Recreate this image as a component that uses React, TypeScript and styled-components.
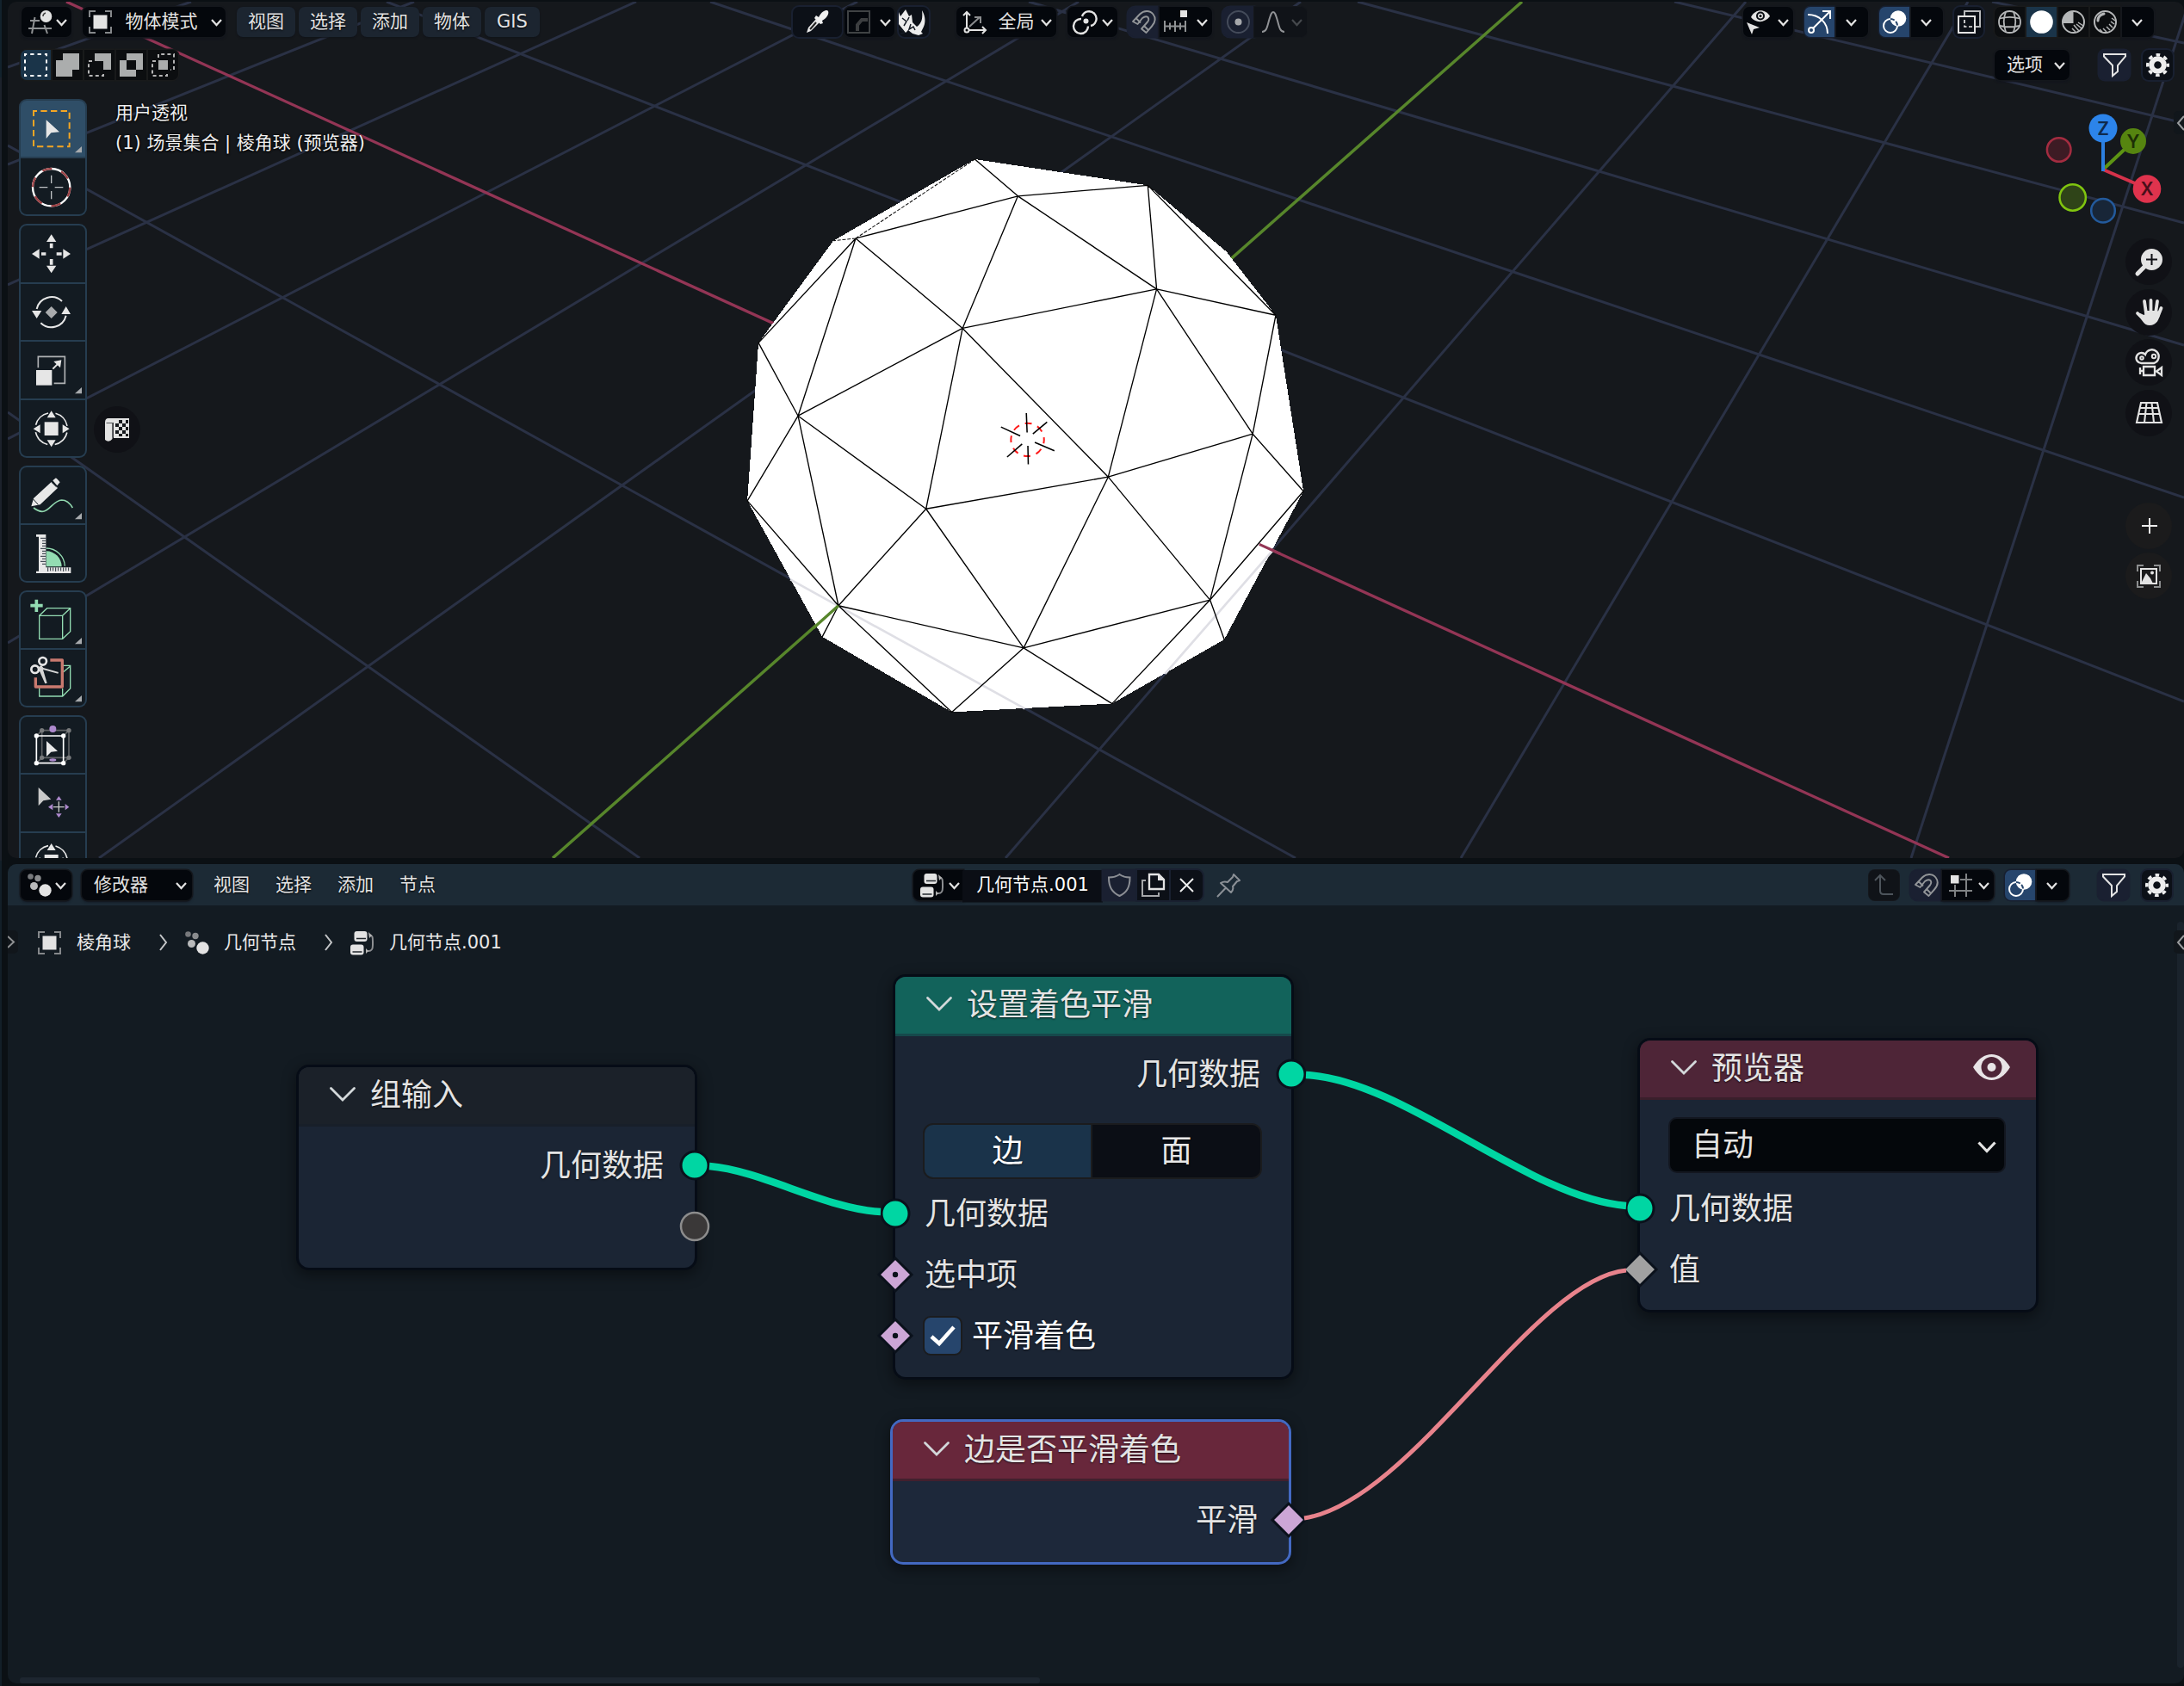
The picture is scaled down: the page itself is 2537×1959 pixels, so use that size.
import React from "react";
import styled, { createGlobalStyle } from "styled-components";

const GlobalStyle = createGlobalStyle`
  * { box-sizing: border-box; }
  html, body { margin: 0; padding: 0; background: #0b1014; }
  body {
    width: 2537px; height: 1959px; overflow: hidden;
    font-family: "DejaVu Sans", "Noto Sans CJK SC", sans-serif;
    font-size: 21px; line-height: 1; color: #e3e3e3;
  }
  svg { display: block; overflow: visible; flex: none; }
`;

/* ---------- frame ---------- */

const Screen = styled.div`
  width: 2537px; height: 1959px;
  display: grid;
  grid-template-columns: 2px 2528px;
  column-gap: 7px;
  background: #0b1014;
`;
const NeighbourEdge = styled.div`background: linear-gradient(#12222c 0 90px, #1c222b 90px 1000px, #131f28 1000px);`;
const Editors = styled.div`
  display: grid;
  grid-template-rows: 995px 952px;
  row-gap: 7px;
  padding-top: 2px;
`;
const Viewport = styled.section`
  position: relative;
  background: #15181c;
  border-radius: 10px;
  overflow: hidden;
`;
const Scene = styled.svg`position: absolute; left: -9px; top: -2px;`;
const Overlay = styled.div`position: relative; height: 100%; display: flex; flex-direction: column;`;

/* ---------- header widgets ---------- */

const ViewportHeader = styled.div`
  display: grid;
  grid-template-columns: 895px 1105px 1fr;
  padding: 6px 0 0 16px;
  height: 41px;
`;
const SubHeader = styled.div`
  display: flex;
  justify-content: space-between;
  padding: 0 13px 0 15px;
  margin-top: 15px;
  height: 35px;
`;
const Group = styled.div<{ $gap?: number }>`
  display: flex;
  align-items: center;
  height: 35px;
  gap: ${(p) => p.$gap ?? 0}px;
`;

type Tone = "dark" | "menu" | "blue" | "quiet" | "outline" | "off" | "seg" | "segOn" | "field" | "none";
const tones: Record<Tone, string> = {
  dark: "background:#04070c; box-shadow:0 0 0 1.5px #14171c, 0 2px 3px #10131d;",
  menu: "background:#1c2530; box-shadow:0 1px 2px #101319;",
  blue: "background:#26456c; box-shadow:0 0 0 1.5px #171f2f;",
  quiet: "background:#1a2031; box-shadow:0 0 0 1.5px #1a2031;",
  outline: "background:#0c1017; box-shadow:0 0 0 2px #192030;",
  off: "background:#101318; box-shadow:0 0 0 1px #14171c;",
  seg: "background:#0c0e10; box-shadow:0 0 0 1.5px #191a1b;",
  segOn: "background:#1a3449; box-shadow:0 0 0 1.5px #191a1b;",
  field: "background:#0b0e15; box-shadow:0 1.5px 0 1px #0b0e15; color:#fff;",
  none: "",
};
const Button = styled.div<{ $w: number; $tone?: Tone; $ml?: number; $r?: string; $pad?: string; $justify?: string }>`
  display: flex;
  align-items: center;
  justify-content: ${(p) => p.$justify ?? "center"};
  flex: none;
  width: ${(p) => p.$w}px;
  height: 35px;
  margin-left: ${(p) => p.$ml ?? 0}px;
  padding: ${(p) => p.$pad ?? "0"};
  border-radius: ${(p) => p.$r ?? "7px"};
  white-space: pre;
  text-shadow: 0 1px 2px #000;
  ${(p) => tones[p.$tone ?? "dark"]}
`;
const Label = styled.span<{ $ml?: number }>`
  margin-left: ${(p) => p.$ml ?? 0}px;
  white-space: pre;
`;

/* ---------- tool shelf ---------- */

const ViewportBody = styled.div`position: relative; flex: 1; display: flex; align-items: flex-start; padding: 22px 0 0 13px;`;
const Shelf = styled.div`display: flex; flex-direction: column; gap: 9px;`;
const ToolGroup = styled.div<{ $n: number }>`
  width: 79px;
  height: ${(p) => p.$n * 68}px;
  background: #263d50;
  border-radius: 9px;
  padding: 2px;
  display: flex;
  flex-direction: column;
  gap: 2px;
  overflow: hidden;
`;
const Tool = styled.div<{ $on?: boolean }>`
  width: 75px;
  flex: 1;
  background: ${(p) => (p.$on ? "#2f4e67" : "#131b22")};
  &:first-child { border-radius: 7px 7px 0 0; }
  &:last-child { border-radius: 0 0 7px 7px; }
`;
const SceneText = styled.div`
  display: flex; flex-direction: column; gap: 14px;
  margin: 6px 0 0 33px;
  font-size: 21px;
  color: #efefef;
  white-space: pre;
  text-shadow: 0 0 3px #000, 0 1px 2px #000;
`;
const Round = styled.div<{ $bg?: string }>`
  display: grid; place-items: center;
  width: 54px; height: 54px; border-radius: 50%;
  background: ${(p) => p.$bg ?? "#101116"};
`;
const LoneRound = styled(Round)`position: absolute; left: 100px; top: 379px;`;
const NavColumn = styled.div`
  position: absolute; right: 14px; top: 184px;
  display: flex; flex-direction: column; gap: 4.5px;
`;
const NavSpacer = styled.div`height: 68px;`;
const EdgeTab = styled.div<{ $left?: boolean; $top: number }>`
  position: absolute;
  ${(p) => (p.$left ? "left: 0; border-radius: 0 5px 5px 0;" : "right: 0; border-radius: 5px 0 0 5px;")}
  top: ${(p) => p.$top}px;
  width: 12px; height: 27px;
  background: #11161b;
  display: flex; align-items: center;
  justify-content: ${(p) => (p.$left ? "flex-start" : "flex-end")};
`;

/* ---------- node editor ---------- */

const NodeEditor = styled.section`
  position: relative;
  background: #131b22;
  border-radius: 10px;
  overflow: hidden;
  display: flex; flex-direction: column;
`;
const NodeHeader = styled.div`
  display: grid;
  grid-template-columns: 1037px 1110px 1fr;
  align-items: center;
  height: 48px;
  padding: 0 0 0 15px;
  background: #1c2a35;
`;
const Breadcrumb = styled.div`
  display: flex; align-items: center;
  height: 36px;
  margin-top: 25px;
  padding-left: 35px;
  color: #e8e8e8;
`;
const Canvas = styled.div`position: absolute; left: -9px; top: -1004px; width: 2537px; height: 1959px;`;
const Links = styled.svg`position: absolute; left: 0; top: 0;`;
const ScrollV = styled.div`position: absolute; right: 0; top: 67px; width: 8px; height: 867px; border-radius: 4px; background: #1a232c;`;
const ScrollH = styled.div`position: absolute; left: 14px; bottom: 0; width: 1185px; height: 7px; border-radius: 3px; background: #1d2630;`;

const NodeBox = styled.div<{ $x: number; $y: number; $h: number; $sel?: boolean }>`
  position: absolute;
  left: ${(p) => p.$x}px; top: ${(p) => p.$y}px;
  width: 460px; height: ${(p) => p.$h}px;
  border-radius: 12px;
  background: ${(p) => (p.$sel ? "#1d283a" : "#1b2534")};
  box-shadow: 0 0 0 3px ${(p) => (p.$sel ? "#4369c2" : "#060c16")}, 0 5px 16px 4px rgba(0,0,0,.42);
  font-size: 36px;
  color: #e4e4e4;
  text-shadow: 0 1px 2px rgba(0,0,0,.7);
`;
const NodeTitle = styled.div<{ $bg: string; $line: string }>`
  display: flex; align-items: center;
  height: 69px;
  padding: 0 30px 4px 36px;
  border-radius: 12px 12px 0 0;
  background: ${(p) => p.$bg};
  border-bottom: 3px solid ${(p) => p.$line};
`;
const TitleText = styled.span`margin: 4px 0 0 17px; flex: 1;`;
const NodeRow = styled.div<{ $right?: boolean; $h?: number; $white?: boolean }>`
  position: relative;
  display: flex; align-items: center;
  justify-content: ${(p) => (p.$right ? "flex-end" : "flex-start")};
  height: ${(p) => p.$h ?? 71}px;
  padding: 0 36px 0 34px;
  ${(p) => p.$white && "color:#fff;"}
`;
const RowText = styled.span<{ $ml?: number }>`margin: 2px 0 0 ${(p) => p.$ml ?? 0}px;`;
const SocketSpot = styled.svg<{ $right?: boolean }>`
  position: absolute; top: 50%;
  ${(p) => (p.$right ? "right: -22px;" : "left: -22px;")}
  margin-top: -22px;
`;
const Toggle = styled.div`
  display: grid; grid-template-columns: 193px 1fr; gap: 2px;
  margin: 13px 34px 4px 32px;
  height: 65px;
  border: 2px solid #1b1c1e;
  border-radius: 12px;
  background: #1b1c1e;
  overflow: hidden;
`;
const ToggleCell = styled.div<{ $on?: boolean }>`
  display: grid; place-items: center;
  background: ${(p) => (p.$on ? "#1a334a" : "#0b0e15")};
  color: ${(p) => (p.$on ? "#fff" : "#e8e8e8")};
`;
const Checkbox = styled.div`
  display: grid; place-items: center;
  width: 46px; height: 46px; margin-left: -2px;
  border: 2px solid #1b1c1e; border-radius: 9px;
  background: #26456c;
`;
const Select = styled.div`
  display: flex; align-items: center; justify-content: space-between;
  margin: 20px 35px 5px 33px;
  padding: 0 9px 0 25px;
  height: 65px;
  border-radius: 10px;
  border: 2px solid #131720;
  background: #04070b;
  & > svg { margin-top: 5px; }
`;

/* ---------- icons ---------- */

const W = "#e3e3e3";
const Svg = ({ w = 27, h = 27, children }: { w?: number; h?: number; children: React.ReactNode }) => (
  <svg width={w} height={h} viewBox={`0 0 ${w} ${h}`} fill="none" stroke={W} strokeWidth={2}>{children}</svg>
);
const Chevron = ({ color = W }: { color?: string }) => <Svg w={13} h={9}><path d="M1 2 6.500 8 12 2" stroke={color} strokeWidth={2.200} /></Svg>;
const Crumb = () => <Svg w={10} h={18}><path d="M1 0 8 9 1 18" stroke="#c4c6c8" /></Svg>;

const ViewportIcon = () => (
  <Svg>
    <g stroke="#8f9193"><path d="M2 12h11M0 21h27M7.500 8 4 27M18.500 17 22 27" /></g>
    <ellipse cx={20.500} cy={7} rx={6.800} ry={7} fill={W} stroke="none" />
    <path d="M17 7a4 4 0 0 1 3-4" stroke="#444" strokeWidth={1.500} />
  </Svg>
);
const ObjectIcon = () => (
  <Svg>
    <path d="M1 8V1h7M19 1h7v7M26 19v7h-7M8 26H1v-7" stroke="#85888b" strokeWidth={2} />
    <rect x={5.500} y={5.500} width={16} height={16} fill={W} stroke="none" />
  </Svg>
);
const dash = { strokeDasharray: "4 3.2" };
const SelNew = () => <Svg><rect x={1} y={1} width={25} height={25} stroke="#fff" strokeDasharray="4.300 4.030" strokeDashoffset={2.100} /></Svg>;
const SelAdd = () => <Svg><path d="M8 0h19v19h-8v8H0V8h8z" fill="#abadad" stroke="none" /></Svg>;
const SelSub = () => <Svg><path d="M8 0h19v19h-9V9H8z" fill="#abadad" stroke="none" /><path d="M5 9H1v17h17v-5" stroke="#b4b4b4" {...dash} /></Svg>;
const SelXor = () => <Svg><path d="M8 0h19v19h-8v8H0V8h8zM8 8v11h11V8z" fillRule="evenodd" fill="#abadad" stroke="none" /></Svg>;
const SelAnd = () => <Svg><rect x={8} y={8} width={11} height={11} fill="#abadad" stroke="none" /><path d="M8 5V1h18v18h-4M5 9H1v17h17v-4" stroke="#b4b4b4" {...dash} /></Svg>;

const Dropper = () => (
  <Svg>
    <path d="M15 8c4-8 10-9 11-7s0 7-7 11l1 3-3 1-7-7 2-3z" fill="#f0f0f0" stroke="none" />
    <path d="M12 10 3 20l-2 6 5-2 10-10z" fill="#e8e8e8" stroke="none" />
    <path d="m12 14-7 8" stroke="#222" />
  </Svg>
);
const DimIcon = () => <Svg><rect x={1} y={1} width={25} height={25} stroke="#3f4244" /><path d="M12 24v-7l5-6h7" stroke="#3c3e40" strokeWidth={4} /></Svg>;
const Rhino = () => (
  <Svg w={30} h={30}>
    <path d="M0 3 2 8 8 0l4 8 3-2 1 9 5 5c6-4 7-10 6-19 3 5 5 12 2 19l-3 6 2 2-5 2-7-2-5-4-3 3-8-10z" fill="#ececec" stroke="none" />
    <path d="m4 10 5 4-3 5M14 17l-2 6 5-3 2 4M0 22l5 3M2 28l5-1M12 9l-2 4" stroke="#151b24" strokeWidth={1.500} />
  </Svg>
);
const Orient = () => (
  <Svg>
    <path d="M4 23V2M0 6l4-4 4 4M5 23h21M22 19l4 4-4 4" />
    <path d="M7 19 19 8M13 8h7v7" stroke="#8b8d8f" />
    <circle cx={4} cy={23} r={2.500} fill="#04070c" />
  </Svg>
);
const Pivot = () => (
  <Svg>
    <circle cx={14.500} cy={12.500} r={3} fill={W} stroke="none" />
    <path d="M10 7a8.500 8.500 0 1 1 10 11M17 18.500A8.500 8.500 0 1 1 9 10" strokeWidth={2.400} />
  </Svg>
);
const Magnet = () => <Svg><path d="M1 13 9 4.500C14-.5 21 0 24.500 4.500 28 9 27 14 23 18.500L16.500 26 11 21.500l7-8c2-2.500 1.500-4 .5-5.500-2-1.500-4-1-6.500 1L6.500 16ZM5 9.500l5 5M14 18l5 5" stroke="#929598" strokeWidth={1.900} strokeLinejoin="round" /></Svg>;
const SnapInc = () => (
  <Svg><rect x={19} y={0} width={8} height={8} fill={W} stroke="none" /><path d="M1 12v13M7 14.500v8M13 12v13M19 14.500v8M25 12v13M1 18.500h24" stroke="#8f9193" /></Svg>
);
const PropEdit = () => <Svg><circle cx={13.500} cy={13.500} r={12.500} stroke="#444b5a" /><circle cx={13.500} cy={13.500} r={4} fill="#a6a8ac" stroke="none" /></Svg>;
const Falloff = () => <Svg><path d="M0 25c5 0 6-5 8-13 2-7 3-10 5-10s3 3 5 10c2 8 3 13 8 13" stroke="#909295" /></Svg>;
const EyeCursor = () => (
  <Svg>
    <path d="M5 8C10-2 22-2 27 7 21 15 10 15 5 8z" fill={W} stroke="none" />
    <circle cx={16} cy={6.500} r={4} stroke="#0a0d12" /><circle cx={16} cy={6.500} r={1.500} fill="#0a0d12" stroke="none" />
    <path d="m0 14 15 6-7 2-2 6z" fill={W} stroke="none" />
  </Svg>
);
const GizmoIcon = () => <Svg><circle cx={4} cy={23} r={3} stroke="#fff" /><path d="M6 21 26 1M17 1h9v9" stroke="#fff" /><path d="M0 5c13 0 23 9 23 22" stroke="#fff" /></Svg>;
const OverlayIcon = () => (
  <Svg>
    <circle cx={18} cy={9.500} r={9.300} fill="#fff" stroke="none" />
    <circle cx={9} cy={18} r={8} stroke="#fff" />
    <path d="M9 10a8 8 0 0 1 8 8" stroke="#26456c" strokeWidth={2} strokeDasharray="5 2" />
  </Svg>
);
const XrayIcon = () => <Svg><path d="M8 6V1h18v18h-5" stroke="#b7b9bb" /><rect x={1} y={7} width={19} height={19} /><path d="M8 11v8h9" strokeDasharray="4 2.500" strokeWidth={1.700} /></Svg>;
const WireSphere = () => <Svg><g stroke="#b5b7b8" strokeWidth={1.800}><circle cx={13.500} cy={13.500} r={12.500} /><path d="M9 2c-3 7-3 15 0 23M18 2c3 7 3 15 0 23M2 9.500c7-2 16-2 23 0M2 18c7 1.500 16 1.500 23 0" /></g></Svg>;
const SolidSphere = () => <Svg><circle cx={13.500} cy={13.500} r={13.300} fill="#fff" stroke="none" /></Svg>;
const MatSphere = () => <Svg><circle cx={13.500} cy={13.500} r={12.500} stroke="#b5b7b8" /><path d="M13.500 1v14H1A12.500 12.500 0 0 1 13.500 1z" fill="#b5b7b8" stroke="none" /><path d="m14 17 6 7M17 16l6 5M19 14l6 4M12 21l4 4" stroke="#b5b7b8" strokeWidth={1.500} /></Svg>;
const RenderSphere = () => <Svg><circle cx={13.500} cy={13.500} r={12.500} stroke="#b5b7b8" /><path d="M5 12c0-4 3-7 7-8" stroke="#b5b7b8" strokeWidth={3} strokeLinecap="round" /><path d="m21 9 4 3M20 13l4 3M18 16l4 4M15 19l4 4M11 21l4 4M7 22l3 3" stroke="#b5b7b8" strokeWidth={1.500} /></Svg>;
const Funnel = () => <Svg><path d="M1 1h25v2.500L17 14v7l-6 5V14L1 3.500z" strokeWidth={2} /></Svg>;
const Gear = () => (
  <Svg>
    <circle cx={13.500} cy={13.500} r={7.300} strokeWidth={6} stroke="#ededed" />
    <circle cx={13.500} cy={13.500} r={11.800} strokeWidth={3.400} stroke="#ededed" strokeDasharray="4.634 4.634" strokeDashoffset={2.317} />
  </Svg>
);
const GeoNodes = () => (
  <Svg>
    <circle cx={3.500} cy={3.500} r={3.300} fill="#77797c" stroke="none" /><circle cx={12} cy={5.500} r={3.700} fill="#8a8c8e" stroke="none" />
    <circle cx={7.500} cy={14.500} r={4.500} fill="#b9babb" stroke="none" /><circle cx={20.500} cy={19.500} r={7.200} fill={W} stroke="none" />
  </Svg>
);
const NodeTree = () => (
  <Svg>
    <rect x={4.500} y={0} width={15} height={12} rx={3} fill={W} stroke="none" /><path d="M7 8.500h11" stroke="#22272c" strokeWidth={1.500} />
    <rect x={0} y={15.500} width={15.500} height={12} rx={3} fill={W} stroke="none" /><path d="M2.500 24h11" stroke="#22272c" strokeWidth={1.500} />
    <path d="M22 4c4 1 4 3 4 8v4c0 5-1 7-5 7h-3" stroke="#8d8f92" /><path d="m21 1 4 4-3 3zM18 20l3 3-3 3z" fill="#b5b5b5" stroke="none" />
  </Svg>
);
const Shield = () => <Svg><path d="M13.500 1c4 3 8 3.500 12 3.500 0 11-3 17-12 21.500C4.500 21.500 1 15.500 1 4.500c5 0 8.500-.5 12.500-3.500z" stroke="#8b8e94" /></Svg>;
const Copy = () => <Svg><path d="M5 8H1v18h19v-4" stroke="#a5a7a9" /><path d="M9 1h11l6 6v11H9z" strokeWidth={2.300} /><path d="M19 0v8h8z" fill={W} stroke="none" /></Svg>;
const Close = () => <Svg w={17} h={17}><path d="m1 1 15 15M16 1 1 16" stroke="#ededed" /></Svg>;
const Pin = () => <Svg><path d="M19 1 26 8l-3 1-5 6c1 3 0 5-2 7L4 11c3-2 5-2 8-1l6-6zM10 16.500 0 27" stroke="#8b9096" strokeLinejoin="round" /></Svg>;
const UpArrow = () => <Svg><path d="M7 2v18c0 3 1 4 4 4h11M1 8l6-6 6 6" stroke="#4d545b" /></Svg>;
const SnapGrid = () => <Svg><path d="M7 13v14M20 0v27M13 7h14M0 20h27" stroke="#7f8284" /><rect x={2} y={2} width={9.500} height={9.500} fill={W} stroke="none" /></Svg>;

/* Tool drawings share one coordinate grid; y is the top of the tool's cell on it. */
const Art = ({ y, more, children }: { y: number; more?: boolean; children: React.ReactNode }) => (
  <svg width={75} height={65} viewBox={`73 ${y} 225 195`} fill="none" stroke="#e6e6e6" strokeWidth={5}>
    {children}
    {more && <path d={`M286 ${y + 159}v22h-24z`} fill="#a8abae" stroke="none" />}
  </svg>
);

const SelectTool = () => (
  <Art y={51} more>
    <path d="M118 87H243V211H118Z" stroke="#f5a623" strokeWidth={6} strokeDasharray="22 13" strokeDashoffset={10} />
    <path d="M162 118l46 42-29 3-17 20z" fill="#e6e6e6" stroke="none" />
  </Art>
);
const CursorTool = () => (
  <Art y={250}>
    <circle cx={180} cy={351} r={65} stroke="#fff" strokeWidth={7} />
    <circle cx={180} cy={351} r={65} stroke="#9c4145" strokeWidth={7} strokeDasharray="34 34.070" />
    <path d="M180 309v28M180 364v28M138 351h29M192 351h29" stroke="#c0c3c6" strokeWidth={4} />
  </Art>
);
const MoveTool = () => (
  <Art y={486}>
    <path d="M180 517l17 26h-34zM180 652l17-26h-34zM112 585l26-17v34zM247 585l-26-17v34z" fill="#e6e6e6" stroke="none" />
    <path d="M180 548v17M180 603v20M145 585h16M198 585h18" strokeWidth={11} />
  </Art>
);
const RotateTool = () => (
  <Art y={687}>
    <path d="M129 774A53 53 0 0 1 217 747M231 797A53 53 0 0 1 143 823" strokeWidth={6} />
    <path d="M112 780h34l-17 27zM215 792h32l-16-27z" fill="#e6e6e6" stroke="none" />
    <path d="M180 765l21 21-21 21-21-21z" fill="#a9abad" stroke="none" />
  </Art>
);
const ScaleTool = () => (
  <Art y={890} more>
    <path d="M134 981V942H227V1035H189" stroke="#b0b2b4" />
    <rect x={127} y={989} width={55} height={53} fill="#e6e6e6" stroke="none" />
    <path d="M185 985l21-21" strokeWidth={6} /><path d="M215 954l-4 27-23-22z" fill="#e6e6e6" stroke="none" />
  </Art>
);
const TransformArt = ({ dy = 0 }: { dy?: number }) => (
  <g transform={`translate(0 ${dy})`}>
    <circle cx={180} cy={1194} r={56} strokeDasharray="62 26" strokeDashoffset={-13} />
    <path d="M180 1131l15 24h-30zM180 1257l15-24h-30zM117 1194l24-15v30zM243 1194l-24-15v30z" fill="#e6e6e6" stroke="none" />
    <rect x={156} y={1170} width={48} height={47} fill="#e6e6e6" stroke="none" />
  </g>
);
const AnnotateTool = () => (
  <Art y={69} more>
    <path d="M118 210c50 40 60-25 98-27q22 0 38 27" stroke="#8fd6ad" strokeWidth={5} />
    <path d="M110 205l8-28 62-57 22 21-61 58zM185 115l9-8q4-2 16 14l-10 12z" fill="#e8e8e8" stroke="none" />
    <path d="M116 179l18 20M180 120l17 17" stroke="#131b22" strokeWidth={3} />
  </Art>
);
const MeasureTool = () => (
  <Art y={270}>
    <path d="M127 303h34v115h87v20H127v-7h9V311h-9z" fill="#e8e8e8" stroke="none" />
    <path d="M142 316h19M148 325h13M148 334h13M148 343h13M142 352h19M148 361h13M148 370h13M142 379h19M148 388h13M142 397h19M148 406h13M168 418v14M177 418v12M186 418v12M195 418v14M204 418v12M213 418v12M222 418v14M231 418v12M240 418v12" stroke="#27303a" strokeWidth={3} />
    <path d="M162 361a54 54 0 0 1 54 54h-54z" fill="#93dcb2" stroke="none" /><path d="M162 351a65 65 0 0 1 65 62" stroke="#93dcb2" strokeWidth={4} />
  </Art>
);
const CubeTool = () => (
  <Art y={504} more>
    <path d="M138 586h81v81h-81zM138 586l27-26h81v81l-27 26M219 586l27-26" stroke="#93dcb2" strokeWidth={4} />
    <path d="M128 530v43M107 551h43" stroke="#93dcb2" strokeWidth={11} />
  </Art>
);
const CutTool = () => (
  <Art y={705} more>
    <path d="M138 838v29h81l27-27v-80h-26M219 840v27M222 782l24-20" stroke="#93dcb2" strokeWidth={4} />
    <path d="M176 741h42v93h-93v-32" stroke="#c9796f" strokeWidth={10} strokeLinejoin="round" />
    <circle cx={150} cy={745} r={13} strokeWidth={8} /><circle cx={123} cy={773} r={13} strokeWidth={8} />
    <path d="M145 758l7 10 53 15-2 5-52-14 14 47-7 2-22-50-4-4z" fill="#d6d6d6" stroke="none" />
  </Art>
);
const CageTool = () => (
  <Art y={939}>
    <path d="M147 986h94v95h-94zM128 1005l19-19M222 1005l19-19M222 1100l19-19M128 1100l19-19" stroke="#5f6264" />
    <g fill="#77797b" stroke="none"><circle cx={147} cy={986} r={8} /><circle cx={241} cy={986} r={8} /><circle cx={241} cy={1081} r={8} /><circle cx={147} cy={1081} r={8} /></g>
    <path d="M128 1005h94v95h-94z" stroke="#fff" />
    <g fill="#fff" stroke="none"><circle cx={128} cy={1005} r={8} /><circle cx={222} cy={1005} r={8} /><circle cx={222} cy={1100} r={8} /><circle cx={128} cy={1100} r={8} /></g>
    <circle cx={185} cy={981} r={12} fill="#ad89cd" stroke="none" /><ellipse cx={185} cy={1089} rx={12} ry={5} fill="#ad89cd" stroke="none" />
    <path d="M163 1023l39 35-23 3-16 16z" fill="#e8e8e8" stroke="none" />
  </Art>
);
const TweakTool = () => (
  <Art y={1140}>
    <path d="M135 1185l44 41-27 5-17 18z" fill="#c9c9c9" stroke="none" />
    <path d="M206 1234v37M187 1253h38" stroke="#c9c9c9" strokeWidth={4} />
    <path d="M206 1215l10 14h-20zM206 1290l10-14h-20zM169 1253l16-11v22zM242 1253l-14-11v22z" fill="#ad89cd" stroke="none" />
  </Art>
);

/* ---------- 3D scene ---------- */

const GRID: number[][] = [
  [9, 78, 222, 2], [9, 191, 481, 2], [9, 331, 739, 2], [9, 510, 996, 2], [9, 747, 1253, 2], [115, 997, 1511, 2],
  [1168, 997, 2028, 2], [1697, 997, 2286, 2], [2220, 997, 2543, 2],
  [2314, 2, 2537, 50], [1945, 2, 2537, 143], [1577, 2, 2537, 259], [1195, 2, 2537, 401], [825, 2, 2537, 578],
  [449, 2, 2537, 815], [9, 169, 1505, 997], [9, 479, 743, 997],
];
const V: Record<string, [number, number]> = {
  a: [655, 56], b: [1105, 124], c: [1438, 462], d: [1510, 920], e: [1304, 1306], f: [1012, 1473], g: [595, 1495],
  h: [258, 1299], i: [63, 945], j: [92, 534], k: [345, 262], l: [767, 152], m: [1128, 394], n: [623, 496], o: [195, 724],
  p: [528, 966], q: [1002, 883], r: [1378, 771], s: [1267, 1203], t: [782, 1328], u: [300, 1218], v: [287, 268], w: [1310, 297],
};
const EDGES = "al lb kl kj ko kn ln lm bm bc mc mn no np nq mq mr cr jo oi op ou pu pq qr rd rs qs qt pt ut ts ds iu uh ug tg tf sf se".split(" ");
const HULL = "abwcdefghijv";

const SceneArt = () => (
  <Scene width={2537} height={1000} viewBox="0 0 2537 1000" fill="none">
    {GRID.map((g, n) => <line key={n} x1={g[0]} y1={g[1]} x2={g[2]} y2={g[3]} stroke="#2a3145" strokeWidth={3} />)}
    <line x1={77} y1={2} x2={2264} y2={997} stroke="#933555" strokeWidth={3.300} />
    <line x1={642} y1={997} x2={1768} y2={2} stroke="#57862b" strokeWidth={3.500} />
    <g transform="translate(840 160) scale(.44643)">
      <polygon points={HULL.split("").map((c) => V[c].join(",")).join(" ")} fill="#fff" shapeRendering="crispEdges" />
      <path d="M175 1150 785 1486M1432 1072 1150 1395" stroke="#dfdfe5" strokeWidth={6} />
      <path d={EDGES.map((e) => `M${V[e[0]]}L${V[e[1]]}`).join("")} stroke="#000" strokeWidth={3} />
      <path d="M345 262 655 56M345 262 287 268" stroke="#111" strokeWidth={2.400} strokeDasharray="9 4" />
      <path d="M300 1218 235 1276" stroke="#57862b" strokeWidth={7.500} />
      <path d="M1395 1058 1450 1083" stroke="#933555" strokeWidth={7} />
      <circle cx={792} cy={786} r={43} stroke="#ff1a1a" strokeWidth={4.500} strokeDasharray="18 15.770" strokeDashoffset={8} />
      <path d="M789 717l2 50M793 802l1 48M723 753l50 23M811 793l51 22M843 740l-37 31M739 831l39-34" stroke="#000" strokeWidth={3.500} />
    </g>
    <g strokeWidth={4}>
      <path d="M2443 197 2478 164" stroke="#5d9414" /><path d="M2443 197 2494 219" stroke="#d5324a" /><path d="M2443 199V149" stroke="#2c7fe0" />
      <g strokeWidth={2.500}>
        <circle cx={2391.700} cy={174} r={13.800} fill="#3d1b24" stroke="#a32c40" />
        <circle cx={2407.700} cy={229.500} r={15.200} fill="#2f4418" stroke="#80c50f" />
        <circle cx={2443} cy={244.700} r={13.800} fill="#182638" stroke="#235a9c" />
      </g>
      <circle cx={2443} cy={149} r={16.500} fill="#2c84ea" /><circle cx={2478} cy={164} r={15} fill="#568510" /><circle cx={2494} cy={219.500} r={16.300} fill="#e0334d" />
    </g>
    <g fontFamily="Inter, sans-serif" fontSize={21} fontWeight={600} textAnchor="middle">
      <text x={2443} y={157} fill="#0f2a4c">Z</text><text x={2478} y={172} fill="#1d2f06">Y</text><text x={2494} y={227} fill="#4a0f1a">X</text>
    </g>
  </Scene>
);

/* ---------- navigation icons ---------- */
const ZoomIcon = () => <Svg w={31} h={31}><circle cx={18.500} cy={12.500} r={12.500} fill={W} stroke="none" /><path d="m2 29 8-8" strokeWidth={5} strokeLinecap="round" /><path d="M18.500 6v13M12 12.500h13" stroke="#101116" /></Svg>;
const HandIcon = () => (
  <Svg w={31} h={31}>
    <g strokeLinecap="round" strokeWidth={3.800}><path d="m10 3 2 14M17.500 2v14M25 3l-2 14M29.500 11l-4 10M2 17l6 6" /></g>
    <path d="M1 17c5-1 6 2 9 2l1-5h13l4 1c0 9-4 16-12 16-7 0-8-6-15-14z" fill={W} stroke="none" />
  </Svg>
);
const CameraIcon = () => (
  <Svg w={31} h={31}>
    <path d="M7 16a6 6 0 1 1 4-10A8 8 0 1 1 21 16z" strokeWidth={2.400} /><circle cx={7} cy={10} r={1.800} /><circle cx={21} cy={8} r={2.200} />
    <path d="M9 20h13v10H9zM5 21v8M5 25h4M30 21v9l-6-4.500z" strokeWidth={2.300} />
  </Svg>
);
const GridIcon = () => <Svg w={31} h={27}><path d="M6 2h19l5 23H1zM5 8h21M3 15h25M12.500 2 10 25M18.500 2 21 25" strokeWidth={2.100} /></Svg>;
const PlusIcon = () => <Svg w={18} h={18}><path d="M10 0v18M1 9h18" stroke="#ededed" /></Svg>;
const FrameIcon = () => (
  <Svg w={28} h={27}><path d="M1 8V1h7M20 1h7v7M27 19v7h-7M8 26H1v-7" stroke="#8d8f90" /><rect x={5} y={5} width={18} height={17} /><path d="m5 22 6-12 5 6 3 6z" fill={W} stroke="none" /><circle cx={18} cy={9.500} r={2} fill={W} stroke="none" /></Svg>
);
const ScrollIcon = () => (
  <Svg w={28} h={27}>
    <path d="M4 0h24v23H10V5H0Q0 0 4 0z" fill={W} stroke="none" />
    <path d="M0 4.500h8.500V24q-4 5-8.500 1z" fill={W} stroke="none" />
    <path d="M1.500 5.500h7.500V22" stroke="#55585b" strokeWidth={1.200} />
    <path d="M16 2h4v4h4v4h-4v4h4v4h-4v3h-4v-3h4v-4h-4v-4h4V6h-4zM24 2h3v4h-3zM24 10h3v4h-3zM24 18h3v3h-3zM12 6h4v4h-4zM12 14h4v4h-4z" fill="#15181c" stroke="none" />
  </Svg>
);

/* ---------- node parts ---------- */

type Kind = "geo" | "empty" | "bool" | "field" | "value";
const Socket = ({ kind, right }: { kind: Kind; right?: boolean }) => (
  <SocketSpot $right={right} width={44} height={44} viewBox="-22 -22 44 44" fill="none">
    {kind === "geo" && <circle r={16} fill="#00d6a3" stroke="#0a111b" strokeWidth={3} />}
    {kind === "empty" && <circle r={16} fill="#3a3838" stroke="#8c8c8c" strokeWidth={2.500} />}
    {(kind === "bool" || kind === "field" || kind === "value") && (
      <path d="M0-19 19 0 0 19-19 0z" fill={kind === "value" ? "#a1a1a1" : "#cca6d6"} stroke="#0a111b" strokeWidth={3} />
    )}
    {kind === "field" && <circle r={3.200} fill="#0a111b" />}
  </SocketSpot>
);
const NodeChevron = () => <Svg w={30} h={17}><path d="M1.500 1.500 15 15 28.500 1.500" stroke="#d3d8da" strokeWidth={2.800} strokeLinecap="round" /></Svg>;
const EyeIcon = () => (
  <Svg w={43} h={30}>
    <path d="M0 15C12-5 31-5 43 15 31 35 12 35 0 15z" fill="#e8e4e6" stroke="none" /><circle cx={21.500} cy={15} r={12} fill="#4e2537" stroke="none" /><circle cx={21.500} cy={15} r={5} fill="#e8e4e6" stroke="none" />
  </Svg>
);

export default function App() {
  return (
    <>
      <GlobalStyle />
      <Screen>
        <NeighbourEdge />
        <Editors>
          <Viewport>
            <SceneArt />
            <Overlay>
              <ViewportHeader>
                <Group>
                  <Button $w={58} $pad="0 5px 0 8px" $justify="space-between"><ViewportIcon /><Chevron /></Button>
                  <Button $w={166} $ml={13} $pad="0 4px 0 7px" $justify="space-between"><ObjectIcon /><Label>物体模式</Label><Chevron /></Button>
                  <Button $w={68} $ml={13} $tone="menu"><Label>视图</Label></Button>
                  <Button $w={68} $ml={4} $tone="menu"><Label>选择</Label></Button>
                  <Button $w={68} $ml={4} $tone="menu"><Label>添加</Label></Button>
                  <Button $w={68} $ml={4} $tone="menu"><Label>物体</Label></Button>
                  <Button $w={64} $ml={4} $tone="menu"><Label>GIS</Label></Button>
                </Group>
                <Group>
                  <Button $w={57} $ml={1} $tone="outline"><Dropper /></Button>
                  <Button $w={58} $ml={3} $pad="0 4px 0 3px" $justify="space-between"><DimIcon /><Chevron /></Button>
                  <Button $w={35} $ml={5} $tone="outline" $justify="flex-start"><Rhino /></Button>
                  <Button $w={116} $ml={32} $pad="0 5px 0 8px" $justify="space-between"><Orient /><Label $ml={6}>全局</Label><Chevron /></Button>
                  <Button $w={58} $ml={13} $pad="0 5px 0 7px" $justify="space-between"><Pivot /><Chevron /></Button>
                  <Button $w={37} $ml={12} $r="9px 0 0 9px" $tone="quiet"><Magnet /></Button>
                  <Button $w={61} $r="0 7px 7px 0" $pad="0 5px" $justify="space-between"><SnapInc /><Chevron /></Button>
                  <Button $w={37} $ml={12} $r="9px 0 0 9px" $tone="quiet"><PropEdit /></Button>
                  <Button $w={61} $r="0 7px 7px 0" $tone="off" $pad="0 5px 0 9px" $justify="space-between"><Falloff /><Chevron color="#45484c" /></Button>
                </Group>
                <Group>
                  <Button $w={58} $pad="0 5px 0 4px" $justify="space-between"><EyeCursor /><Chevron /></Button>
                  <Button $w={35} $ml={13} $r="7px 0 0 7px" $tone="blue"><GizmoIcon /></Button>
                  <Button $w={37} $ml={2} $r="0 7px 7px 0" $pad="0 2px 0 0"><Chevron /></Button>
                  <Button $w={35} $ml={13} $r="7px 0 0 7px" $tone="blue"><OverlayIcon /></Button>
                  <Button $w={37} $ml={2} $r="0 7px 7px 0" $pad="0 2px 0 0"><Chevron /></Button>
                  <Button $w={34} $ml={13} $tone="outline"><XrayIcon /></Button>
                  <Button $w={35} $ml={13} $r="7px 0 0 7px" $tone="seg"><WireSphere /></Button>
                  <Button $w={35} $ml={2} $r="0" $tone="segOn"><SolidSphere /></Button>
                  <Button $w={35} $ml={2} $r="0" $tone="seg"><MatSphere /></Button>
                  <Button $w={35} $ml={2} $r="0" $tone="seg"><RenderSphere /></Button>
                  <Button $w={37} $ml={2} $r="0 7px 7px 0" $pad="0 2px 0 0"><Chevron /></Button>
                </Group>
              </ViewportHeader>
              <SubHeader>
                <Group $gap={2}>
                  <Button $w={35} $r="7px 0 0 7px" $tone="segOn"><SelNew /></Button>
                  <Button $w={35} $r="0" $tone="seg"><SelAdd /></Button>
                  <Button $w={35} $r="0" $tone="seg"><SelSub /></Button>
                  <Button $w={35} $r="0" $tone="seg"><SelXor /></Button>
                  <Button $w={35} $r="0 7px 7px 0" $tone="seg"><SelAnd /></Button>
                </Group>
                <Group>
                  <Button $w={87} $pad="0 5px 0 14px" $justify="space-between"><Label>选项</Label><Chevron /></Button>
                  <Button $w={36} $ml={34} $tone="quiet"><Funnel /></Button>
                  <Button $w={35} $ml={15} $tone="outline"><Gear /></Button>
                </Group>
              </SubHeader>
              <ViewportBody>
                <Shelf>
                  <ToolGroup $n={2}><Tool $on><SelectTool /></Tool><Tool><CursorTool /></Tool></ToolGroup>
                  <ToolGroup $n={4}>
                    <Tool><MoveTool /></Tool><Tool><RotateTool /></Tool><Tool><ScaleTool /></Tool>
                    <Tool><Art y={1094}><TransformArt /></Art></Tool>
                  </ToolGroup>
                  <ToolGroup $n={2}><Tool><AnnotateTool /></Tool><Tool><MeasureTool /></Tool></ToolGroup>
                  <ToolGroup $n={2}><Tool><CubeTool /></Tool><Tool><CutTool /></Tool></ToolGroup>
                  <ToolGroup $n={3}><Tool><CageTool /></Tool><Tool><TweakTool /></Tool><Tool><Art y={1344}><TransformArt dy={249} /></Art></Tool></ToolGroup>
                </Shelf>
                <SceneText><span>用户透视</span><span>(1) 场景集合 | 棱角球 (预览器)</span></SceneText>
                <LoneRound><ScrollIcon /></LoneRound>
                <NavColumn>
                  <Round><ZoomIcon /></Round>
                  <Round><HandIcon /></Round>
                  <Round><CameraIcon /></Round>
                  <Round><GridIcon /></Round>
                  <NavSpacer />
                  <Round $bg="#1b1b1c"><PlusIcon /></Round>
                  <Round $bg="#1b1b1c"><FrameIcon /></Round>
                </NavColumn>
              </ViewportBody>
            </Overlay>
            <EdgeTab $top={127}><Svg w={8} h={16}><path d="M8 0 1 8l7 8" stroke="#9a9c9e" /></Svg></EdgeTab>
          </Viewport>

          <NodeEditor>
            <NodeHeader>
              <Group>
                <Button $w={59} $pad="0 6px 0 8px" $justify="space-between"><GeoNodes /><Chevron /></Button>
                <Button $w={128} $ml={12} $pad="0 6px 0 14px" $justify="space-between"><Label>修改器</Label><Chevron /></Button>
                <Button $w={72} $ml={10} $tone="none"><Label>视图</Label></Button>
                <Button $w={72} $tone="none"><Label>选择</Label></Button>
                <Button $w={72} $tone="none"><Label>添加</Label></Button>
                <Button $w={72} $tone="none"><Label>节点</Label></Button>
              </Group>
              <Group>
                <Button $w={58} $r="7px 0 0 7px" $pad="0 4px 0 8px" $justify="space-between"><NodeTree /><Chevron /></Button>
                <Button $w={161} $r="0" $tone="field"><Label>几何节点.001</Label></Button>
                <Button $w={39} $ml={1} $r="0" $tone="quiet"><Shield /></Button>
                <Button $w={37} $ml={1} $r="0" $tone="outline"><Copy /></Button>
                <Button $w={37} $ml={2} $r="0 7px 7px 0" $tone="outline"><Close /></Button>
                <Button $w={37} $ml={12} $tone="none"><Pin /></Button>
              </Group>
              <Group>
                <Button $w={35} $tone="off" $pad="0 0 0 3px"><UpArrow /></Button>
                <Button $w={36} $ml={13} $r="9px 0 0 9px" $tone="quiet"><Magnet /></Button>
                <Button $w={60} $ml={1} $r="0 7px 7px 0" $pad="0 5px 0 8px" $justify="space-between"><SnapGrid /><Chevron /></Button>
                <Button $w={35} $ml={13} $r="7px 0 0 7px" $tone="blue"><OverlayIcon /></Button>
                <Button $w={37} $ml={2} $r="0 7px 7px 0" $pad="0 2px 0 0"><Chevron /></Button>
                <Button $w={36} $ml={34} $tone="quiet"><Funnel /></Button>
                <Button $w={35} $ml={15} $tone="outline"><Gear /></Button>
              </Group>
            </NodeHeader>
            <Breadcrumb>
              <ObjectIcon /><Label $ml={18}>棱角球</Label>
              <Button $w={63} $tone="none" $pad="0 0 0 13px"><Crumb /></Button>
              <GeoNodes /><Label $ml={18}>几何节点</Label>
              <Button $w={63} $tone="none" $pad="0 0 0 13px"><Crumb /></Button>
              <NodeTree /><Label $ml={18}>几何节点.001</Label>
            </Breadcrumb>

            <Canvas>
              <NodeBox $x={347} $y={1240} $h={233}>
                <NodeTitle $bg="#1b2129" $line="#181f29"><NodeChevron /><TitleText>组输入</TitleText></NodeTitle>
                <NodeRow $right $h={90}><RowText>几何数据</RowText><Socket kind="geo" right /></NodeRow>
                <NodeRow $right $h={51}><Socket kind="empty" right /></NodeRow>
              </NodeBox>

              <NodeBox $x={1040} $y={1135} $h={465}>
                <NodeTitle $bg="#12635b" $line="#15494b"><NodeChevron /><TitleText>设置着色平滑</TitleText></NodeTitle>
                <NodeRow $right $h={88}><RowText>几何数据</RowText><Socket kind="geo" right /></NodeRow>
                <Toggle><ToggleCell $on>边</ToggleCell><ToggleCell>面</ToggleCell></Toggle>
                <NodeRow><RowText>几何数据</RowText><Socket kind="geo" /></NodeRow>
                <NodeRow><RowText>选中项</RowText><Socket kind="field" /></NodeRow>
                <NodeRow $white><Checkbox><Svg w={30} h={26}><path d="M2 14 11 22 28 3" stroke="#fff" strokeWidth={4.500} /></Svg></Checkbox><RowText $ml={11}>平滑着色</RowText><Socket kind="field" /></NodeRow>
              </NodeBox>

              <NodeBox $x={1037} $y={1652} $h={163} $sel>
                <NodeTitle $bg="#68273b" $line="#42202e"><NodeChevron /><TitleText>边是否平滑着色</TitleText></NodeTitle>
                <NodeRow $right $h={90}><RowText>平滑</RowText><Socket kind="bool" right /></NodeRow>
              </NodeBox>

              <NodeBox $x={1905} $y={1209} $h={313}>
                <NodeTitle $bg="#4e2537" $line="#3a1f2b"><NodeChevron /><TitleText>预览器</TitleText><EyeIcon /></NodeTitle>
                <Select><span>自动</span><Svg w={22} h={14}><path d="M1.500 1.500 11 11.500 20.500 1.500" strokeWidth={3.200} /></Svg></Select>
                <NodeRow><RowText>几何数据</RowText><Socket kind="geo" /></NodeRow>
                <NodeRow><RowText>值</RowText><Socket kind="value" /></NodeRow>
              </NodeBox>

              <Links width={2537} height={1959} fill="none">
                <path d="M824 1355C885 1360 960 1405 1023 1408M1517 1249C1632 1255 1775 1392 1889 1401" stroke="#00d6a3" strokeWidth={8.500} />
                <path d="M1515 1764C1640 1745 1780 1487 1889 1476" stroke="#e8838c" strokeWidth={5} />
              </Links>
            </Canvas>
            <ScrollV /><ScrollH />
            <EdgeTab $left $top={77}><Svg w={8} h={15}><path d="M0 1 7 7.500 0 14" stroke="#8f9193" /></Svg></EdgeTab>
            <EdgeTab $top={77}><Svg w={8} h={16}><path d="M8 0 1 8l7 8" stroke="#9a9c9e" /></Svg></EdgeTab>
          </NodeEditor>
        </Editors>
      </Screen>
    </>
  );
}
